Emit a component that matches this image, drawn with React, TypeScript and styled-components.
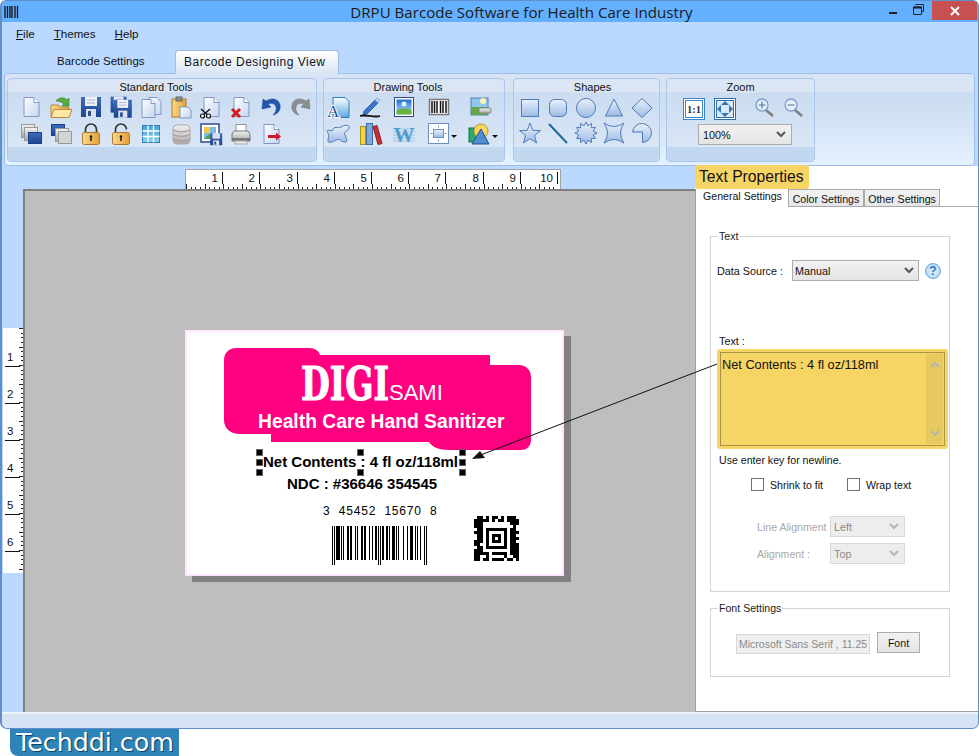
import React from 'react';
import styled, { createGlobalStyle } from 'styled-components';

const GlobalStyle = createGlobalStyle`
  html, body {
    margin: 0;
    background: #fff;
    font-family: 'Liberation Sans', Arial, sans-serif;
    color: #111;
  }
  * { box-sizing: border-box; }
`;

const LINE = '#8097c8';
const SHAPE = '#4f7ab8';

const DrawnLetter = styled.text`
  font-family: 'Liberation Serif', serif;
`;

const DefsHolder = styled.svg`
  position: absolute;
  width: 0;
  height: 0;
`;

const SharedDefs = () => (
  <DefsHolder>
    <defs>
      <linearGradient id="paper" x1="0" y1="0" x2="1" y2="1">
        <stop offset="0" stopColor="#fff" />
        <stop offset="1" stopColor="#c5d5ef" />
      </linearGradient>
      <linearGradient id="navy" x1="0" y1="0" x2="0" y2="1">
        <stop offset="0" stopColor="#3f6dbb" />
        <stop offset="1" stopColor="#1d4590" />
      </linearGradient>
      <linearGradient id="gold" x1="0" y1="0" x2="1" y2="0">
        <stop offset="0" stopColor="#fbd98a" />
        <stop offset="1" stopColor="#e59f38" />
      </linearGradient>
      <linearGradient id="silver" x1="0" y1="0" x2="0" y2="1">
        <stop offset="0" stopColor="#f2f2f2" />
        <stop offset="1" stopColor="#a8a8a8" />
      </linearGradient>
      <linearGradient id="shape" x1="0" y1="0" x2="0" y2="1">
        <stop offset="0" stopColor="#eaf1fb" />
        <stop offset="1" stopColor="#9cbbe4" />
      </linearGradient>
      <linearGradient id="sky" x1="0" y1="0" x2="0" y2="1">
        <stop offset="0" stopColor="#1f6fd0" />
        <stop offset="1" stopColor="#bfe3fb" />
      </linearGradient>
      <linearGradient id="teal" x1="0" y1="0" x2="0" y2="1">
        <stop offset="0" stopColor="#4aa3d8" />
        <stop offset="1" stopColor="#8fd0ea" />
      </linearGradient>
      <linearGradient id="docBlue" x1="0" y1="0" x2="0" y2="1">
        <stop offset="0" stopColor="#fff" />
        <stop offset="1" stopColor="#58a8dc" />
      </linearGradient>
    </defs>
  </DefsHolder>
);

const Sheet = () => (
  <>
    <path d="M5 2.5h10l5 5v14H5z" fill="url(#paper)" stroke={LINE} />
    <path d="M15 2.5v5h5" fill="#fff" stroke={LINE} />
  </>
);

const Floppy = ({ x = 0, y = 0, s = 1 }: { x?: number; y?: number; s?: number }) => (
  <g transform={`translate(${x} ${y}) scale(${s})`}>
    <rect x="2" y="2" width="20" height="20" fill="url(#navy)" />
    <rect x="6" y="2" width="12" height="9" fill="#eef2f8" />
    <path d="M8 5h8M8 8h8" stroke="#a9b6cc" />
    <rect x="7" y="14" width="10" height="8" fill="#dde2ea" />
    <rect x="9" y="16" width="3" height="5" fill="#2a4f96" />
  </g>
);

// Spiky outline for the burst shape
const burstPath = (points: number, outer: number, inner: number) => {
  const parts: string[] = [];
  for (let i = 0; i < points * 2; i++) {
    const r = i % 2 === 0 ? outer : inner;
    const a = (Math.PI * i) / points - Math.PI / 2;
    parts.push(`${(12 + r * Math.cos(a)).toFixed(1)} ${(12 + r * Math.sin(a)).toFixed(1)}`);
  }
  return `M${parts.join('L')}Z`;
};

const icons: Record<string, React.ReactNode> = {
  newFile: <Sheet />,
  open: (
    <>
      <path d="M2 10h7l2 2h9v10H2z" fill="url(#gold)" stroke="#b8893a" />
      <path d="M2 22.5l3-8h18l-3 8z" fill="#ffe9a6" stroke="#b8893a" />
      <path d="M7 6c3-4 8-4 11-1l2-2v8h-7l2-2c-2-2-5-3-8-3z" fill="#58ad42" stroke="#2e7a25" strokeWidth=".6" />
    </>
  ),
  save: <Floppy />,
  saveAs: (
    <>
      <Floppy x={0} y={0} s={0.8} />
      <Floppy x={3} y={3} s={0.9} />
    </>
  ),
  copy: (
    <>
      <path d="M10 2.5h8l4 4v13H10z" fill="url(#paper)" stroke={LINE} />
      <path d="M3 4.5h9l4 4v14H3z" fill="url(#paper)" stroke={LINE} />
      <path d="M12 4.5v4h4" fill="#fff" stroke={LINE} />
    </>
  ),
  paste: (
    <>
      <rect x="3" y="4" width="14" height="18" fill="url(#gold)" stroke="#a8782c" />
      <rect x="7" y="2" width="6" height="4" fill="#8a8f96" stroke="#666" />
      <path d="M11 12h8l3 3v8H11z" fill="url(#paper)" stroke={LINE} />
    </>
  ),
  cut: (
    <>
      <Sheet />
      <path d="M2 14l9 8M11 14l-9 8" stroke="#111" strokeWidth="1.4" />
      <circle cx="3.5" cy="21" r="2" fill="#fff" stroke="#111" strokeWidth="1.2" />
      <circle cx="9.5" cy="21" r="2" fill="#fff" stroke="#111" strokeWidth="1.2" />
    </>
  ),
  remove: (
    <>
      <Sheet />
      <path d="M3 14l8 8M11 14l-8 8" stroke="#d21c1c" strokeWidth="3" />
    </>
  ),
  undo: <path d="M4 4l-1 10 9-2-3-3c5-2 9 1 8 6-.4 2-1.500 3.500-3 5 5-1 8-5 7-10-1-6-8-8-14-4z" fill="#2257ae" stroke="#173f86" strokeWidth=".5" />,
  redo: <path d="M20 4l1 10-9-2 3-3c-5-2-9 1-8 6 .4 2 1.500 3.500 3 5-5-1-8-5-7-10 1-6 8-8 14-4z" fill="#8b8e91" stroke="#6f7275" strokeWidth=".5" />,
  sendBack: (
    <>
      <rect x="2.500" y="2.500" width="13" height="13" fill="url(#silver)" stroke="#999" />
      <rect x="5.500" y="5.500" width="13" height="13" fill="url(#silver)" stroke="#999" />
      <rect x="9.500" y="10.500" width="13" height="11" fill="url(#navy)" stroke="#1d3f85" />
    </>
  ),
  bringFront: (
    <>
      <rect x="2.500" y="2.500" width="13" height="11" fill="url(#navy)" stroke="#1d3f85" />
      <rect x="6.500" y="6.500" width="13" height="13" fill="url(#silver)" stroke="#999" />
      <rect x="9.500" y="9.500" width="13" height="12" fill="#d4d4d4" stroke="#999" />
    </>
  ),
  lock: (
    <>
      <path d="M6.500 11V7.500a5.500 5.500 0 0 1 11 0V11" fill="none" stroke="#333" strokeWidth="1.700" />
      <rect x="3.500" y="10.500" width="17" height="12" rx="2" fill="url(#gold)" stroke="#a8782c" />
      <path d="M12 14v5" stroke="#222" strokeWidth="1.600" />
      <circle cx="12" cy="14.500" r="1.300" fill="#222" />
    </>
  ),
  unlock: (
    <>
      <path d="M6.500 11V7.500a5.500 5.500 0 0 1 11 0" fill="none" stroke="#333" strokeWidth="1.700" />
      <rect x="3.500" y="10.500" width="17" height="12" rx="2" fill="url(#gold)" stroke="#a8782c" />
      <path d="M12 14v5" stroke="#222" strokeWidth="1.600" />
      <circle cx="12" cy="14.500" r="1.300" fill="#222" />
    </>
  ),
  table: (
    <>
      <rect x="3.500" y="3.500" width="17" height="17" fill="url(#teal)" stroke="#2f7fb4" />
      <path d="M3.500 9h17M3.500 14.500h17M9 3.500v17M14.500 3.500v17" stroke="#fff" strokeWidth="1.300" />
    </>
  ),
  database: (
    <>
      <rect x="4" y="3" width="17" height="19" rx="4" fill="url(#silver)" stroke="#aaa" />
      <path d="M4 8c4 2.500 13 2.500 17 0M4 12.500c4 2.500 13 2.500 17 0M4 17c4 2.500 13 2.500 17 0" fill="none" stroke="#b59a9a" strokeWidth="1.400" />
    </>
  ),
  saveImage: (
    <>
      <rect x="2" y="2" width="18" height="18" fill="#fff" stroke="#2b4c8c" strokeWidth="1.500" />
      <rect x="5" y="5" width="12" height="12" fill="#7fb8e8" />
      <rect x="5" y="5" width="6" height="6" fill="#f2c84a" />
      <path d="M5 17l5-5 4 5z" fill="#4fa04a" />
      <Floppy x={10} y={10} s={0.6} />
    </>
  ),
  printer: (
    <>
      <rect x="7" y="2.500" width="10" height="9" fill="#fff" stroke="#8c93a0" />
      <path d="M3 12l2-3h14l2 3v7H3z" fill="url(#silver)" stroke="#777" />
      <rect x="3" y="16" width="18" height="3" fill="#777" />
      <rect x="6" y="19" width="12" height="3" fill="#e8e8e8" stroke="#aaa" />
    </>
  ),
  exportFile: (
    <>
      <Sheet />
      <path d="M9 13h8v-2.500l5 4-5 4V16H9z" fill="#d2182a" />
    </>
  ),
  textFile: (
    <>
      <path d="M6 2.500h12l4 4v16H6z" fill="url(#docBlue)" stroke="#2f7fb4" />
      <DrawnLetter x="0" y="22" fontSize="17" fill="#1c4f92" stroke="#fff" strokeWidth="2" paintOrder="stroke">A</DrawnLetter>
    </>
  ),
  pen: (
    <>
      <path d="M6 16l11-11 3 3-11 11-4 1z" fill="#3b76c8" stroke="#1e4f96" strokeWidth=".7" />
      <path d="M17 5l2-2 3 2-2 3z" fill="#bcd0ec" stroke="#6a89bb" strokeWidth=".5" />
      <path d="M2 21c5-2 14 2 20 0" fill="none" stroke="#111" strokeWidth="1.800" />
    </>
  ),
  picture: (
    <>
      <rect x="2.500" y="2.500" width="19" height="19" fill="#fff" stroke="#33457a" />
      <rect x="4.500" y="4.500" width="15" height="15" fill="url(#sky)" />
      <path d="M4.500 15c5-2 10-2 15 0v4.500h-15z" fill="#67b33b" />
      <circle cx="12" cy="9" r="2.500" fill="#e6f6ff" />
    </>
  ),
  barcode: (
    <>
      <rect x="2.500" y="4.500" width="19" height="15" fill="#fff" stroke="#777" strokeWidth="1.500" />
      <path d="M5 6v12M7.500 6v12M10 6v12M13.500 6v12M16 6v12M19 6v12" stroke="#111" strokeWidth="1.500" />
    </>
  ),
  watermark: (
    <>
      <rect x="3" y="3" width="17" height="17" fill="#8fc8ee" stroke="#557fb5" />
      <circle cx="15" cy="6" r="3" fill="#fff0b8" />
      <path d="M3 12h17v8H3z" fill="#5fa843" />
      <rect x="11" y="13" width="12" height="5" rx="1" fill="url(#silver)" stroke="#888" />
    </>
  ),
  blob: <path d="M5 9C7 3 11 7 14 5s9-3 8 1-6 3-4 7 3 8-1 7-5-4-8-2-9 4-8 0 1-5 0-7-1-1 0-3z" fill="url(#shape)" stroke={SHAPE} />,
  books: (
    <>
      <rect x="2.500" y="4.500" width="5" height="18" fill="#f4d43c" stroke="#a89228" />
      <rect x="8.500" y="1.500" width="6" height="21" fill="#7ea7dc" stroke="#3d6aab" />
      <path d="M15 4.500l4-1 5 18-4 1z" fill="#c9303a" stroke="#8b1f27" />
    </>
  ),
  wordArt: (
    <>
      <path d="M1 7h22M1 10h22M1 13h22M1 16h22M1 19h22" stroke="#9cc4e6" />
      <DrawnLetter x="12" y="20" fontSize="21" textAnchor="middle" fontWeight="bold" fill="#4f9cc9">W</DrawnLetter>
    </>
  ),
  frame: (
    <>
      <rect x="1.500" y="1.500" width="20" height="20" fill="#fff" stroke="#6d8fc2" />
      <rect x="6.500" y="7.500" width="10" height="8" fill="url(#shape)" stroke="#6d8fc2" />
      <path d="M11.500 3.500v2M11.500 17.500v2M3.500 11.500h2M17.500 11.500h2" stroke="#6d8fc2" />
      <path d="M24 13h6l-3 3z" fill="#111" />
    </>
  ),
  shapesSet: (
    <>
      <rect x="1" y="6" width="10" height="14" fill="#2aa86a" stroke="#1a6f46" />
      <circle cx="13" cy="9" r="7" fill="#f6d65e" stroke="#b7952a" />
      <path d="M13 7l8 15H4z" fill="#4f8cd0" stroke="#264f8f" />
      <path d="M24 13h6l-3 3z" fill="#111" />
    </>
  ),
  square: <rect x="3.500" y="3.500" width="17" height="17" fill="url(#shape)" stroke={SHAPE} />,
  rounded: <rect x="3.500" y="3.500" width="17" height="17" rx="5" fill="url(#shape)" stroke={SHAPE} />,
  circle: <circle cx="12" cy="12" r="9.500" fill="url(#shape)" stroke={SHAPE} />,
  triangle: <path d="M12 3l8.500 17h-17z" fill="url(#shape)" stroke={SHAPE} />,
  diamond: <path d="M12 2.500l10 9.500-10 9.500L2 12z" fill="url(#shape)" stroke={SHAPE} />,
  star: <path d="M12 2l2.800 7.300 7.700.3-6 4.900 2.100 7.500-6.600-4.300-6.600 4.300 2.100-7.500-6-4.900 7.700-.3z" fill="url(#shape)" stroke={SHAPE} />,
  line: <path d="M3 3l18 19" stroke="#1d6a94" strokeWidth="2" />,
  burst: <path d={burstPath(12, 11, 7.5)} fill="url(#shape)" stroke={SHAPE} />,
  fourStar: <path d="M2 2Q12 9 22 2Q15 12 22 22Q12 15 2 22Q9 12 2 2z" fill="url(#shape)" stroke={SHAPE} />,
  pie: <path d="M2.500 11a9.500 9.500 0 1 1 10 10.500V11z" fill="url(#shape)" stroke={SHAPE} />,
  actualSize: (
    <>
      <rect x="1.500" y="1.500" width="21" height="21" fill="#fff" stroke="#3a86c8" />
      <rect x="3.500" y="3.500" width="17" height="17" fill="#fff" stroke="#3a86c8" />
      <DrawnLetter x="12" y="16" fontSize="10.500" textAnchor="middle" fontWeight="bold" fill="#333">1:1</DrawnLetter>
    </>
  ),
  fit: (
    <>
      <rect x="1.500" y="1.500" width="21" height="21" fill="#fff" stroke="#2f6da8" />
      <rect x="3.500" y="3.500" width="17" height="17" fill="#dbe8f5" stroke="#2f6da8" />
      <path d="M12 4l4 4H8zM12 20l-4-4h8zM4 12l4-4v8zM20 12l-4 4V8z" fill="#2f78b4" />
    </>
  ),
  zoomIn: (
    <>
      <path d="M13 13l7 6" stroke="#808080" strokeWidth="2.600" />
      <circle cx="9" cy="8" r="6" fill="#e6eef9" stroke="#7d9ccb" strokeWidth="1.300" />
      <path d="M5.500 8h7M9 4.500v7" stroke="#5577aa" strokeWidth="1.200" />
    </>
  ),
  zoomOut: (
    <>
      <path d="M13 13l7 6" stroke="#808080" strokeWidth="2.600" />
      <circle cx="9" cy="8" r="6" fill="#e6eef9" stroke="#7d9ccb" strokeWidth="1.300" />
      <path d="M5.500 8h7" stroke="#5577aa" strokeWidth="1.200" />
    </>
  ),
};

const standardTools = [
  'newFile', 'open', 'save', 'saveAs', 'copy', 'paste', 'cut', 'remove', 'undo', 'redo',
  'sendBack', 'bringFront', 'lock', 'unlock', 'table', 'database', 'saveImage', 'printer', 'exportFile',
];
const drawingTools = ['textFile', 'pen', 'picture', 'barcode', 'watermark', 'blob', 'books', 'wordArt', 'frame', 'shapesSet'];
const shapeTools = ['square', 'rounded', 'circle', 'triangle', 'diamond', 'star', 'line', 'burst', 'fourStar', 'pie'];

const Tool = ({ name }: { name: string }) => (
  <ToolCell>
    <ToolGlyph viewBox="0 0 24 24">{icons[name]}</ToolGlyph>
  </ToolCell>
);

const Chevron = ({ muted, up }: { muted?: boolean; up?: boolean }) => (
  <ChevronGlyph viewBox="0 0 10 7">
    <path
      d={up ? 'M1 6l4-4 4 4' : 'M1 1l4 4 4-4'}
      fill="none"
      stroke={muted ? '#b5b5b5' : '#555'}
      strokeWidth="2"
    />
  </ChevronGlyph>
);

// Horizontal ruler of the designer, one major tick per 37.2px
const HorizontalRuler = () => {
  const ticks = [];
  for (let i = 0; i < 80; i++) {
    const x = i * 4.65;
    const h = i % 4 === 0 ? 5 : 2;
    ticks.push(<path key={i} d={`M${Math.round(x) + 0.5} 19v-${h}`} stroke="#222" />);
  }
  const labels = [];
  for (let i = 1; i <= 10; i++) {
    const x = Math.round(i * 37.2) - 1;
    labels.push(<path key={`m${i}`} d={`M${x + 0.5} 2v12`} stroke="#111" />);
    labels.push(
      <RulerNumber key={`n${i}`} x={x - 4} y={12} textAnchor="end">
        {i}
      </RulerNumber>
    );
  }
  return (
    <RulerTop width="376" height="20" viewBox="0 0 374 19">
      {ticks}
      {labels}
    </RulerTop>
  );
};

const VerticalRuler = () => {
  const ticks = [];
  for (let i = 0; i < 53; i++) {
    const y = i * 4.625;
    const w = i % 4 === 0 ? 4 : 2;
    ticks.push(<path key={i} d={`M${20 - w} ${Math.round(y) + 0.5}h${w}`} stroke="#222" />);
  }
  const labels = [];
  for (let i = 1; i <= 6; i++) {
    const y = i * 37 + 1;
    labels.push(<path key={`m${i}`} d={`M2 ${y + 0.5}h15`} stroke="#111" />);
    labels.push(
      <RulerNumber key={`n${i}`} x={4} y={y - 5}>
        {i}
      </RulerNumber>
    );
  }
  return (
    <RulerSide width="20" height="245" viewBox="0 0 20 245">
      {ticks}
      {labels}
    </RulerSide>
  );
};

// UPC-A bars for the number printed above them
const L_CODES = ['0001101', '0011001', '0010011', '0111101', '0100011', '0110001', '0101111', '0111011', '0110111', '0001011'];
const upcBars = () => {
  const digits = '345452156708'.split('').map(Number);
  const left = digits.slice(0, 6).map((d) => L_CODES[d]).join('');
  const right = digits
    .slice(6)
    .map((d) => L_CODES[d].split('').map((b) => (b === '0' ? '1' : '0')).join(''))
    .join('');
  return `101${left}01010${right}101`;
};

const Barcode = () => {
  const bits = upcBars();
  return (
    <BarcodeArt viewBox="0 0 95 39">
      {bits.split('').map((b, i) => {
        if (b !== '1') return null;
        const guard = i < 3 || (i >= 45 && i < 50) || i >= 92;
        return <rect key={i} x={i} y={0} width={1} height={guard ? 39 : 34} fill="#000" />;
      })}
    </BarcodeArt>
  );
};

const QR_ROWS = [
  '.##.#.##.#.###.',
  '#####.#.##.####',
  '###.........###',
  '###..........#.',
  '.##.#######.##.',
  '###.#.....#.###',
  '.##.#.###.#.##.',
  '.##.#.#.#.#.###',
  '###.#.###.#.##.',
  '##..#.....#.###',
  '.##.#######.###',
  '###.........###',
  '#####.#####.###',
  '##..#.....#..##',
  '##.##.####.##.#',
];

const MatrixCode = () => (
  <MatrixArt viewBox="0 0 45 45">
    {QR_ROWS.map((row, r) =>
      row.split('').map((c, i) =>
        c === '#' ? <rect key={`${r}-${i}`} x={i * 3} y={r * 3} width={3} height={3} fill="#000" /> : null
      )
    )}
  </MatrixArt>
);

const handleSpots = [
  [72, 120], [173, 120], [275, 120],
  [72, 130], [275, 130],
  [72, 140], [173, 140], [275, 140],
];

const App: React.FC = () => {
  return (
    <Page>
      <GlobalStyle />
      <SharedDefs />
      <Window>
        <TitleBar>
          <AppIcon viewBox="0 0 15 12">
            <path d="M1 0v12M3.500 0v12M6 0v12M8 0v12M11 0v12M13.500 0v12" stroke="#111" strokeWidth="1.300" />
          </AppIcon>
          <TitleText>DRPU Barcode Software for Health Care Industry</TitleText>
          <WindowControls>
            <MinimizeButton />
            <RestoreButton viewBox="0 0 11 11">
              <path d="M2.500.5h8v7h-2M.5 3h8v7.500h-8z" fill="none" stroke="#222" />
              <path d="M.5 3.500h8" stroke="#222" strokeWidth="2" />
            </RestoreButton>
            <CloseButton>
              <svg width="10" height="10" viewBox="0 0 10 10">
                <path d="M1 1l8 8M9 1L1 9" stroke="#fff" strokeWidth="2" />
              </svg>
            </CloseButton>
          </WindowControls>
        </TitleBar>

        <MenuBar>
          <MenuItem><u>F</u>ile</MenuItem>
          <MenuItem><u>T</u>hemes</MenuItem>
          <MenuItem><u>H</u>elp</MenuItem>
        </MenuBar>

        <TabRow>
          <PlainTab>Barcode Settings</PlainTab>
          <ActiveTab>Barcode Designing View</ActiveTab>
        </TabRow>

        <Ribbon>
          <ToolGroup $width={310}>
            <GroupTitle $nudge={-6}>Standard Tools</GroupTitle>
            <ToolGrid $columns="repeat(10, 30px)" $pad={8}>
              {standardTools.map((t) => <Tool key={t} name={t} />)}
            </ToolGrid>
            <GroupFooter />
          </ToolGroup>
          <ToolGroup $width={182} $after={2}>
            <GroupTitle $nudge={-6}>Drawing Tools</GroupTitle>
            <ToolGrid $columns="30px 32px 36px 34px 48px" $pad={0}>
              {drawingTools.map((t) => <Tool key={t} name={t} />)}
            </ToolGrid>
            <GroupFooter />
          </ToolGroup>
          <ToolGroup $width={147}>
            <GroupTitle $nudge={6}>Shapes</GroupTitle>
            <ToolGrid $columns="repeat(5, 28px)" $pad={2} $rowHeight={25} $padTop={2}>
              {shapeTools.map((t) => <Tool key={t} name={t} />)}
            </ToolGrid>
            <GroupFooter />
          </ToolGroup>
          <ToolGroup $width={149}>
            <GroupTitle>Zoom</GroupTitle>
            <ZoomBody>
              <ZoomButtons>
                <ZoomCluster>
                  <Tool name="actualSize" />
                  <Tool name="fit" />
                </ZoomCluster>
                <ZoomCluster $tight>
                  <Tool name="zoomIn" />
                  <Tool name="zoomOut" />
                </ZoomCluster>
              </ZoomButtons>
              <ZoomSelect>
                <span>100%</span>
                <Chevron />
              </ZoomSelect>
            </ZoomBody>
            <GroupFooter />
          </ToolGroup>
        </Ribbon>

        <Workspace>
          <DesignArea>
            <TopRulerRow>
              <HorizontalRuler />
            </TopRulerRow>
            <CanvasRow>
              <SideRulerColumn>
                <VerticalRuler />
              </SideRulerColumn>
              <Canvas>
                <LabelSheet>
                  <BannerArt viewBox="0 0 307 102">
                    <path
                      d="M12 0H85C91 0 95 3 96 7H266V17H295C302 17 307 22 307 29V92C307 98 303 102 297 102H225C215 102 208 99 205 94H47V86H16C6 86 0 80 0 72V12C0 5 5 0 12 0Z"
                      fill="#ff0080"
                    />
                  </BannerArt>
                  <BrandMark>DIGI</BrandMark>
                  <BrandSuffix>SAMI</BrandSuffix>
                  <ProductName>Health Care Hand Sanitizer</ProductName>
                  <NetContents>Net Contents : 4 fl oz/118ml</NetContents>
                  <NdcLine>NDC : #36646 354545</NdcLine>
                  <BarcodeNumber>3  45452  15670  8</BarcodeNumber>
                  <BarcodeSpot><Barcode /></BarcodeSpot>
                  <MatrixSpot><MatrixCode /></MatrixSpot>
                  {handleSpots.map(([x, y]) => (
                    <Handle key={`${x}-${y}`} $x={x} $y={y} />
                  ))}
                </LabelSheet>
              </Canvas>
            </CanvasRow>
          </DesignArea>

          <PropertiesPanel>
            <PanelTag>Text Properties</PanelTag>
            <PanelTabs>
              <PanelTabActive>General Settings</PanelTabActive>
              <PanelTab>Color Settings</PanelTab>
              <PanelTab>Other Settings</PanelTab>
              <PanelTabRest />
            </PanelTabs>
            <PanelBody>
              <TextGroup>
                <GroupLegend>Text</GroupLegend>
                <TextGroupInner>
                  <DataSourceRow>
                    <FieldLabel>Data Source :</FieldLabel>
                    <SourceSelect>
                      <span>Manual</span>
                      <Chevron />
                    </SourceSelect>
                    <HelpBadge>?</HelpBadge>
                  </DataSourceRow>
                  <TextCaption>Text :</TextCaption>
                  <TextHighlight>
                    <TextInputBox>
                      <TextValue>Net Contents : 4 fl oz/118ml</TextValue>
                      <TextScroll>
                        <Chevron muted up />
                        <Chevron muted />
                      </TextScroll>
                    </TextInputBox>
                  </TextHighlight>
                  <HintText>Use enter key for newline.</HintText>
                  <CheckRow>
                    <CheckItem><CheckBox />Shrink to fit</CheckItem>
                    <CheckItem><CheckBox />Wrap text</CheckItem>
                  </CheckRow>
                  <AlignRow $first>
                    <MutedLabel>Line Alignment</MutedLabel>
                    <MutedSelect>
                      <span>Left</span>
                      <Chevron muted />
                    </MutedSelect>
                  </AlignRow>
                  <AlignRow>
                    <MutedLabel>Alignment :</MutedLabel>
                    <MutedSelect>
                      <span>Top</span>
                      <Chevron muted />
                    </MutedSelect>
                  </AlignRow>
                </TextGroupInner>
              </TextGroup>
              <FontGroup>
                <GroupLegend>Font Settings</GroupLegend>
                <FontRow>
                  <FontValue>Microsoft Sans Serif , 11.25</FontValue>
                  <FontButton type="button">Font</FontButton>
                </FontRow>
              </FontGroup>
            </PanelBody>
          </PropertiesPanel>
        </Workspace>

        <StatusStrip />

        <ConnectorArrow viewBox="0 0 979 729">
          <path d="M717 364L478 456" stroke="#111" strokeWidth="1" fill="none" />
          <path d="M472 459L480 451L485 458Z" fill="#111" />
        </ConnectorArrow>
      </Window>
      <WatermarkBadge>Techddi.com</WatermarkBadge>
    </Page>
  );
};

const Page = styled.div`
  width: 979px;
  height: 756px;
  overflow: hidden;
  background: #fff;
`;

const Window = styled.div`
  position: relative;
  height: 729px;
  display: flex;
  flex-direction: column;
  background: #bbd9ff;
  border: 1px solid #5f8fc6;
  border-left-width: 2px;
  border-radius: 6px 6px 7px 7px;
  overflow: hidden;
`;

const TitleBar = styled.div`
  position: relative;
  flex: none;
  height: 21px;
  margin-left: -1px;
  background: #62b0ff;
  display: flex;
  align-items: center;
  justify-content: center;
`;

const AppIcon = styled.svg`
  position: absolute;
  left: 3px;
  top: 5px;
  width: 15px;
  height: 12px;
`;

const TitleText = styled.div`
  font-family: 'Open Sans', sans-serif;
  font-size: 15.1px;
  color: #1a1a1a;
  margin-left: 64px;
`;

const WindowControls = styled.div`
  position: absolute;
  right: 1px;
  top: 0;
  height: 19px;
  display: flex;
  align-items: center;
`;

const MinimizeButton = styled.span`
  display: block;
  width: 8px;
  height: 2px;
  margin: 5px 16px 0 0;
  background: #222;
`;

const RestoreButton = styled.svg`
  width: 11px;
  height: 11px;
  margin: 0 8px 2px 0;
`;

const CloseButton = styled.div`
  width: 45px;
  height: 19px;
  background: #c75050;
  display: flex;
  align-items: center;
  justify-content: center;
`;

const MenuBar = styled.div`
  flex: none;
  height: 24px;
  padding: 0 0 1px 14px;
  display: flex;
  align-items: center;
  gap: 19px;
`;

const MenuItem = styled.span`
  font-size: 11.6px;
  color: #111;
`;

const TabRow = styled.div`
  flex: none;
  height: 27px;
  padding: 4px 0 0 55px;
  display: flex;
  align-items: flex-end;
`;

const PlainTab = styled.div`
  width: 118px;
  height: 23px;
  line-height: 23px;
  font-size: 11.5px;
  color: #111;
`;

const ActiveTab = styled.div`
  width: 164px;
  height: 24px;
  margin-bottom: -1px;
  padding-left: 8px;
  line-height: 23px;
  font-size: 12px;
  letter-spacing: 0.5px;
  color: #111;
  background: linear-gradient(#fff, #d8e5f6);
  border: 1px solid #9dbce8;
  border-bottom: none;
  border-radius: 4px 4px 0 0;
  position: relative;
  z-index: 1;
`;

const Ribbon = styled.div`
  flex: none;
  height: 93px;
  margin: 0 3px 0 2px;
  padding: 4px 0 0 2px;
  display: flex;
  gap: 6px;
  border: 1px solid #9dbce8;
  border-radius: 4px;
  background: linear-gradient(#d8e4f4 0, #d8e4f4 18px, #c9dbf1 19px, #e4f1ff 100%);
`;

const ToolGroup = styled.div<{ $width: number; $after?: number }>`
  width: ${(p) => p.$width}px;
  height: 84px;
  margin-right: ${(p) => p.$after ?? 0}px;
  display: flex;
  flex-direction: column;
  border: 1px solid #a9c6ec;
  border-radius: 4px;
  background: linear-gradient(#dbe6f5 0, #dbe6f5 13px, #cbdcf1 14px, #dce8f6 100%);
  overflow: hidden;
`;

const GroupTitle = styled.div<{ $nudge?: number }>`
  flex: none;
  height: 14px;
  padding: 0 ${(p) => ((p.$nudge ?? 0) < 0 ? -2 * (p.$nudge ?? 0) : 0)}px 0 ${(p) => ((p.$nudge ?? 0) > 0 ? 2 * (p.$nudge ?? 0) : 0)}px;
  line-height: 17px;
  text-align: center;
  font-size: 11px;
  color: #111;
`;

const GroupFooter = styled.div`
  flex: none;
  height: 14px;
  background: #c2d7f0;
`;

const ToolGrid = styled.div<{ $columns: string; $pad: number; $rowHeight?: number; $padTop?: number }>`
  flex: 1;
  padding: ${(p) => p.$padTop ?? 0}px 0 0 ${(p) => p.$pad}px;
  display: grid;
  grid-template-columns: ${(p) => p.$columns};
  grid-auto-rows: ${(p) => p.$rowHeight ?? 27}px;
`;

const ToolCell = styled.div`
  width: 100%;
  height: 100%;
  display: flex;
  align-items: center;
  justify-content: center;
`;

const ToolGlyph = styled.svg`
  width: 24px;
  height: 24px;
  overflow: visible;
  flex: none;
`;

const ZoomBody = styled.div`
  flex: 1;
  padding: 1px 0 0 13px;
  display: flex;
  flex-direction: column;
`;

const ZoomButtons = styled.div`
  display: flex;
  gap: 12px;
  height: 30px;
`;

const ZoomCluster = styled.div<{ $tight?: boolean }>`
  display: grid;
  grid-template-columns: 28px 28px;
  column-gap: ${(p) => (p.$tight ? 1 : 3)}px;
`;

const ComboBase = styled.div`
  display: flex;
  align-items: center;
  justify-content: space-between;
  font-size: 10.8px;
  background: linear-gradient(#f2f2f2, #e4e4e4);
  border: 1px solid #acacac;
`;

const ZoomSelect = styled(ComboBase)`
  width: 94px;
  height: 21px;
  margin: 0 0 0 18px;
  padding: 0 5px 0 4px;
`;

const ChevronGlyph = styled.svg`
  width: 10px;
  height: 7px;
  flex: none;
`;

const Workspace = styled.div`
  flex: 1;
  min-height: 0;
  display: flex;
`;

const DesignArea = styled.div`
  width: 693px;
  flex: none;
  display: flex;
  flex-direction: column;
`;

const TopRulerRow = styled.div`
  flex: none;
  height: 23px;
  padding: 3px 0 0 183px;
`;

const RulerTop = styled.svg`
  display: block;
  background: #fff;
  border: solid #a4a4a4;
  border-width: 1px 1px 0 1px;
`;

const RulerSide = styled.svg`
  display: block;
  background: #fff;
`;

const RulerNumber = styled.text`
  font-family: 'Liberation Sans', sans-serif;
  font-size: 11.5px;
  fill: #111;
`;

const CanvasRow = styled.div`
  flex: 1;
  min-height: 0;
  display: flex;
`;

const SideRulerColumn = styled.div`
  flex: none;
  width: 21px;
  padding: 139px 0 0 1px;
`;

const Canvas = styled.div`
  position: relative;
  flex: 1;
  background: #bebebe;
  border-top: 2px solid #7f7f7f;
  border-left: 2px solid #7f7f7f;
`;

const LabelSheet = styled.div`
  position: absolute;
  left: 160px;
  top: 139px;
  width: 379px;
  height: 246px;
  background: #fff;
  border: 2px solid #ffe6ff;
  box-shadow: 7px 6px 0 #808080;
`;

const BannerArt = styled.svg`
  position: absolute;
  left: 37px;
  top: 16px;
  width: 307px;
  height: 102px;
`;

const BrandMark = styled.div`
  position: absolute;
  left: 114px;
  top: 25px;
  font-family: 'DejaVu Serif', serif;
  font-weight: bold;
  font-size: 46px;
  line-height: 54px;
  color: #fff;
  -webkit-text-stroke: 1.2px #fff;
  transform: scaleX(0.72);
  transform-origin: left center;
`;

const BrandSuffix = styled.div`
  position: absolute;
  left: 202px;
  top: 48px;
  font-size: 22px;
  line-height: 26px;
  color: #fff;
`;

const ProductName = styled.div`
  position: absolute;
  left: 71px;
  top: 78px;
  font-size: 19.3px;
  font-weight: bold;
  line-height: 24px;
  white-space: nowrap;
  color: #fff;
`;

const CanvasLine = styled.div`
  position: absolute;
  font-size: 15px;
  font-weight: bold;
  line-height: 18px;
  white-space: nowrap;
  color: #000;
`;

const NetContents = styled(CanvasLine)`
  left: 76px;
  top: 121px;
`;

const NdcLine = styled(CanvasLine)`
  left: 100px;
  top: 143px;
`;

const BarcodeNumber = styled.div`
  position: absolute;
  left: 136px;
  top: 172px;
  font-size: 12px;
  line-height: 14px;
  letter-spacing: 0.8px;
  white-space: pre;
  color: #000;
`;

const BarcodeSpot = styled.div`
  position: absolute;
  left: 145px;
  top: 194px;
`;

const BarcodeArt = styled.svg`
  display: block;
  width: 95px;
  height: 39px;
  shape-rendering: crispEdges;
`;

const MatrixSpot = styled.div`
  position: absolute;
  left: 287px;
  top: 184px;
`;

const MatrixArt = styled.svg`
  display: block;
  width: 45px;
  height: 45px;
  shape-rendering: crispEdges;
`;

const Handle = styled.span<{ $x: number; $y: number }>`
  position: absolute;
  left: ${(p) => p.$x - 3}px;
  top: ${(p) => p.$y - 3}px;
  width: 7px;
  height: 7px;
  background: #000;
  border: 1px solid #666;
`;

const PropertiesPanel = styled.div`
  flex: 1;
  display: flex;
  flex-direction: column;
  background: #fff;
  min-width: 0;
`;

const PanelTag = styled.div`
  flex: none;
  width: 114px;
  height: 24px;
  margin-top: -1px;
  padding-left: 4px;
  line-height: 24px;
  font-size: 15.7px;
  color: #111;
  background: #f7d564;
  border-radius: 3px;
`;

const PanelTabs = styled.div`
  flex: none;
  height: 18px;
  display: flex;
  align-items: stretch;
  font-size: 10.6px;
  white-space: nowrap;
`;

const PanelTabActive = styled.div`
  width: 93px;
  padding-left: 7px;
  line-height: 15px;
  border-left: 1px solid #a0a0a0;
  color: #111;
`;

const PanelTab = styled.div`
  width: 76px;
  text-align: center;
  line-height: 18px;
  color: #111;
  background: linear-gradient(#f2f2f2, #e6e6e6);
  border: 1px solid #a8a8a8;
`;

const PanelTabRest = styled.div`
  flex: 1;
  border-bottom: 1px solid #a8a8a8;
`;

const PanelBody = styled.div`
  flex: 1;
  min-height: 0;
  padding: 22px 26px 0 14px;
  border-left: 1px solid #a0a0a0;
  border-bottom: 1px solid #a0a0a0;
  display: flex;
  flex-direction: column;
`;

const GroupBox = styled.fieldset`
  margin: 0;
  min-width: 0;
  width: 240px;
  border: 1px solid #d4d4d4;
  padding: 0;
`;

const GroupLegend = styled.legend`
  margin-left: 7px;
  padding: 0 1px;
  font-size: 10.6px;
  line-height: 14px;
  color: #222;
`;

const TextGroup = styled(GroupBox)`
  height: 363px;
`;

const TextGroupInner = styled.div`
  padding: 17px 0 0 6px;
`;

const FontGroup = styled(GroupBox)`
  height: 76px;
  margin-top: 9px;
`;

const DataSourceRow = styled.div`
  display: flex;
  align-items: center;
  height: 21px;
`;

const FieldLabel = styled.span`
  width: 75px;
  font-size: 10.8px;
  color: #111;
`;

const SourceSelect = styled(ComboBase)`
  width: 127px;
  height: 21px;
  padding: 0 4px 0 2px;
`;

const HelpBadge = styled.div`
  width: 16px;
  height: 16px;
  margin-left: 6px;
  border-radius: 50%;
  text-align: center;
  line-height: 15px;
  font-size: 12px;
  font-weight: bold;
  color: #2c76c6;
  background: radial-gradient(#eef6ff, #9fcaf0);
  border: 1px solid #6ea4da;
`;

const TextCaption = styled.div`
  margin: 53px 0 0 2px;
  height: 14px;
  line-height: 14px;
  font-size: 10.8px;
  color: #111;
`;

const TextHighlight = styled.div`
  width: 231px;
  height: 100px;
  margin-top: 1px;
  padding: 3px;
  background: #f7d564;
  border-radius: 3px;
`;

const TextInputBox = styled.div`
  height: 100%;
  display: flex;
  justify-content: space-between;
  border: 1px solid #a89347;
  padding: 1px;
`;

const TextValue = styled.div`
  padding: 3px 0 0;
  font-size: 12.75px;
  line-height: 16px;
  color: #111;
`;

const TextScroll = styled.div`
  width: 17px;
  display: flex;
  flex-direction: column;
  justify-content: space-between;
  align-items: center;
  padding: 7px 0;
  background: #e6c95f;
`;

const HintText = styled.div`
  margin: 4px 0 0 2px;
  height: 14px;
  line-height: 14px;
  font-size: 10.6px;
  color: #111;
`;

const CheckRow = styled.div`
  margin: 11px 0 0 34px;
  display: flex;
  gap: 24px;
`;

const CheckItem = styled.label`
  display: flex;
  align-items: center;
  gap: 6px;
  font-size: 10.6px;
  color: #111;
`;

const CheckBox = styled.span`
  display: block;
  width: 13px;
  height: 13px;
  background: #fff;
  border: 1px solid #707070;
`;

const AlignRow = styled.div<{ $first?: boolean }>`
  margin: ${(p) => (p.$first ? 25 : 6)}px 0 0 40px;
  display: flex;
  align-items: center;
`;

const MutedLabel = styled.span`
  width: 73px;
  font-size: 10.6px;
  color: #a8a8a8;
`;

const MutedSelect = styled(ComboBase)`
  width: 75px;
  height: 21px;
  padding: 0 5px 0 3px;
  color: #8a8a8a;
  background: #ededed;
  border-color: #d9d9d9;
`;

const FontRow = styled.div`
  display: flex;
  align-items: flex-start;
  gap: 7px;
  padding: 17px 0 0 25px;
`;

const FontValue = styled.div`
  width: 134px;
  height: 20px;
  margin-top: 2px;
  padding-left: 2px;
  line-height: 18px;
  font-size: 10.5px;
  color: #8a8a8a;
  white-space: nowrap;
  overflow: hidden;
  background: #efefef;
  border: 1px solid #d9d9d9;
`;

const FontButton = styled.button`
  width: 43px;
  height: 21px;
  padding: 0;
  font-family: inherit;
  font-size: 10.6px;
  color: #111;
  background: linear-gradient(#f2f2f2, #e4e4e4);
  border: 1px solid #acacac;
`;

const StatusStrip = styled.div`
  flex: none;
  height: 16px;
  background: #d6e3f4;
  border-top: 2px solid #eef4fc;
`;

const ConnectorArrow = styled.svg`
  position: absolute;
  left: -2px;
  top: -1px;
  width: 979px;
  height: 729px;
  pointer-events: none;
`;

const WatermarkBadge = styled.div`
  width: 169px;
  height: 27px;
  margin-left: 10px;
  padding-left: 6px;
  font-family: 'DejaVu Sans', sans-serif;
  font-size: 25.3px;
  line-height: 27px;
  color: #fff;
  text-shadow: 1px 1px 1px #0c3d5c;
  white-space: nowrap;
  background: #2e84b8;
  border-radius: 0 0 0 8px;
`;

export default App;
